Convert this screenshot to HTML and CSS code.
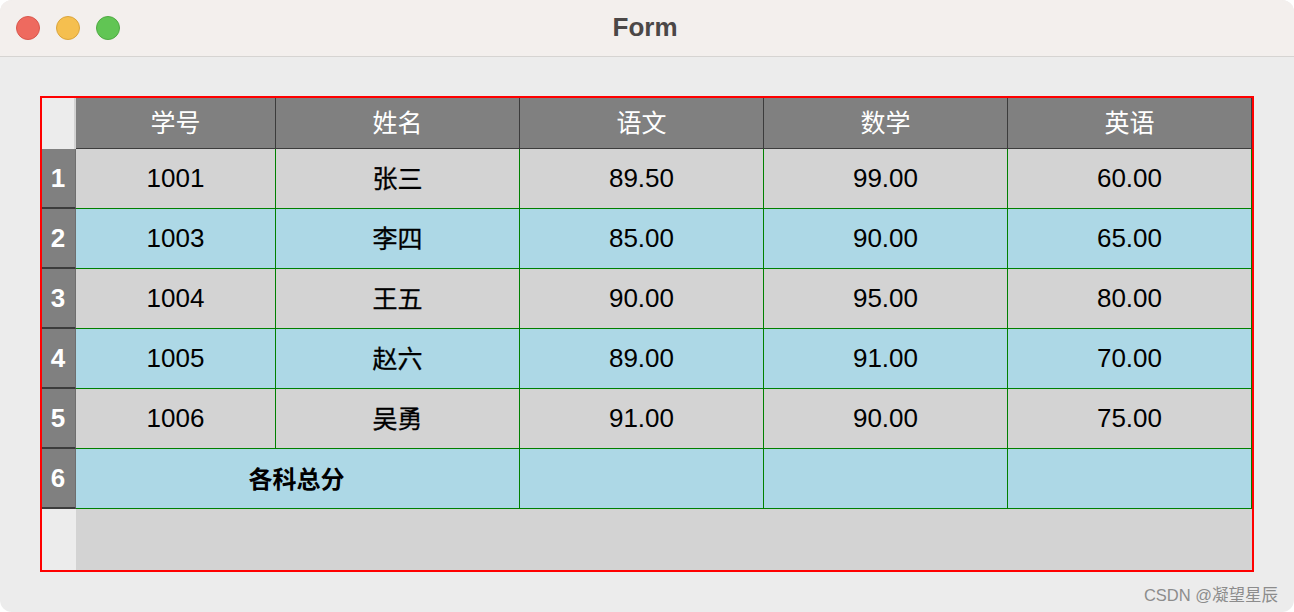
FILE: index.html
```html
<!DOCTYPE html>
<html lang="zh">
<head>
<meta charset="utf-8">
<title>Form</title>
<link rel="stylesheet" href="styles.css">
</head>
<body>
<div class="window">
  <div class="titlebar">
    <div class="lights">
      <span class="light red"></span>
      <span class="light yellow"></span>
      <span class="light green"></span>
    </div>
    <div class="title">Form</div>
    <div class="spacer"></div>
  </div>
  <div class="content">
    <div class="frame">
      <div class="grid">
        <div class="corner"></div>
        <div class="hd">学号</div>
        <div class="hd">姓名</div>
        <div class="hd">语文</div>
        <div class="hd">数学</div>
        <div class="hd">英语</div>

        <div class="rh">1</div>
        <div class="cell odd">1001</div>
        <div class="cell odd cn">张三</div>
        <div class="cell odd">89.50</div>
        <div class="cell odd">99.00</div>
        <div class="cell odd">60.00</div>

        <div class="rh">2</div>
        <div class="cell even">1003</div>
        <div class="cell even cn">李四</div>
        <div class="cell even">85.00</div>
        <div class="cell even">90.00</div>
        <div class="cell even">65.00</div>

        <div class="rh">3</div>
        <div class="cell odd">1004</div>
        <div class="cell odd cn">王五</div>
        <div class="cell odd">90.00</div>
        <div class="cell odd">95.00</div>
        <div class="cell odd">80.00</div>

        <div class="rh">4</div>
        <div class="cell even">1005</div>
        <div class="cell even cn">赵六</div>
        <div class="cell even">89.00</div>
        <div class="cell even">91.00</div>
        <div class="cell even">70.00</div>

        <div class="rh">5</div>
        <div class="cell odd">1006</div>
        <div class="cell odd cn">吴勇</div>
        <div class="cell odd">91.00</div>
        <div class="cell odd">90.00</div>
        <div class="cell odd">75.00</div>

        <div class="rh">6</div>
        <div class="cell even cn total">各科总分</div>
        <div class="cell even"></div>
        <div class="cell even"></div>
        <div class="cell even"></div>
      </div>
      <div class="filler">
        <div class="filler-left"></div>
        <div class="filler-right"></div>
      </div>
    </div>
    <div class="footer">CSDN @凝望星辰</div>
  </div>
</div>
</body>
</html>
```

FILE: styles.css
```css
* {
  box-sizing: border-box;
}

html, body {
  margin: 0;
  padding: 0;
  background: #ffffff;
}

body {
  font-family: "Liberation Sans", "Noto Sans CJK SC", sans-serif;
}

.window {
  width: 1294px;
  height: 612px;
  background: #ececec;
  border-radius: 12px;
  overflow: hidden;
  display: flex;
  flex-direction: column;
}

.titlebar {
  height: 57px;
  flex: none;
  background: #f3efed;
  border-bottom: 1px solid #d6d4d2;
  display: grid;
  grid-template-columns: 1fr auto 1fr;
  align-items: center;
}

.lights {
  display: flex;
  gap: 16px;
  padding-left: 16px;
  padding-bottom: 1px;
}

.light {
  width: 24px;
  height: 24px;
  border-radius: 50%;
  display: block;
}

.light.red {
  background: #ee6a5f;
  border: 1px solid #d9574d;
}

.light.yellow {
  background: #f5bf4f;
  border: 1px solid #dba53c;
}

.light.green {
  background: #61c554;
  border: 1px solid #4faa43;
}

.title {
  font-family: "Liberation Sans", sans-serif;
  font-weight: bold;
  font-size: 26px;
  color: #4b4747;
  padding-right: 4px;
  padding-bottom: 2px;
}

.content {
  flex: 1;
  padding: 39px 0 0 40px;
  display: flex;
  flex-direction: column;
}

.frame {
  width: 1214px;
  height: 476px;
  border: 2px solid #ff0000;
  display: flex;
  flex-direction: column;
}

.grid {
  display: grid;
  grid-template-columns: 34px 200px repeat(4, 244px);
  grid-template-rows: 51px repeat(6, 60px);
}

.corner {
  background: #ececec;
  border-right: 2px solid #d2d2d2;
}

.hd {
  background: #808080;
  color: #ffffff;
  font-family: "Noto Sans CJK SC", sans-serif;
  font-size: 25px;
  display: flex;
  align-items: center;
  justify-content: center;
  border-right: 1px solid #3c3c3c;
  border-bottom: 1px solid #3c3c3c;
  padding-bottom: 4px;
}

.rh {
  background: #808080;
  color: #ffffff;
  font-family: "Liberation Sans", sans-serif;
  font-weight: bold;
  font-size: 26px;
  display: flex;
  align-items: center;
  justify-content: center;
  border-bottom: 2px solid #3c3c3c;
  border-right: 1px solid #6e6e6e;
  padding-right: 1px;
}

.cell {
  display: flex;
  align-items: center;
  justify-content: center;
  color: #000000;
  font-size: 26px;
  border-right: 1px solid #008000;
  border-bottom: 1px solid #008000;
  padding-bottom: 1px;
}

.cell.cn {
  font-family: "Noto Sans CJK SC", sans-serif;
  font-size: 25px;
  padding-bottom: 4px;
  -webkit-text-stroke: 0.3px #000000;
}

.cell.total {
  grid-column: span 2;
  font-weight: bold;
  font-size: 24px;
  padding-bottom: 2px;
  padding-right: 2px;
  -webkit-text-stroke: 0;
}

.odd {
  background: #d3d3d3;
}

.even {
  background: #add8e6;
}

.filler {
  flex: 1;
  display: flex;
}

.filler-left {
  width: 34px;
  background: #ececec;
}

.filler-right {
  flex: 1;
  background: #d3d3d3;
}

.footer {
  width: 1238px;
  margin-top: 13px;
  text-align: right;
  font-family: "Liberation Sans", "Noto Sans CJK SC", sans-serif;
  font-size: 16.5px;
  line-height: 20px;
  color: #8c8c8c;
}
```
